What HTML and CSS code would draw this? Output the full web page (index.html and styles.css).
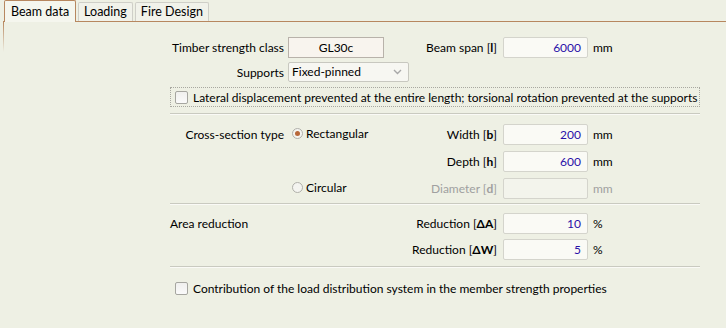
FILE: index.html
```html
<!DOCTYPE html>
<html>
<head>
<meta charset="utf-8">
<link rel="stylesheet" href="styles.css">
</head>
<body>
<div class="tabs">
  <div class="tab active">Beam data</div>
  <div class="tab">Loading</div>
  <div class="tab">Fire Design</div>
</div>
<div class="panel">
  <div class="form">
    <div class="grid top">
      <div class="lbl">Timber strength class</div>
      <div class="cell"><div class="field class-field">GL30c</div></div>
      <div class="lbl r2">Beam span [<b>l</b>]</div>
      <div class="cell"><div class="field num">6000</div></div>
      <div class="unit">mm</div>

      <div class="lbl">Supports</div>
      <div class="cell"><div class="select"><span>Fixed-pinned</span><svg class="chev" width="9" height="6" viewBox="0 0 9 6"><path d="M1 1 L4.5 4.5 L8 1" fill="none" stroke="#a8a8a8" stroke-width="1.4"/></svg></div></div>
    </div>

    <div class="dotted">
      <span class="check"></span>
      <span>Lateral displacement prevented at the entire length; torsional rotation prevented at the supports</span>
    </div>

    <div class="sep"></div>

    <div class="grid cross">
      <div class="lbl">Cross-section type</div>
      <div class="cell radio-cell"><span class="radio on"></span><span>Rectangular</span></div>
      <div class="lbl r2">Width [<b>b</b>]</div>
      <div class="cell"><div class="field num">200</div></div>
      <div class="unit">mm</div>

      <div class="lbl"></div>
      <div class="cell"></div>
      <div class="lbl r2">Depth [<b>h</b>]</div>
      <div class="cell"><div class="field num">600</div></div>
      <div class="unit">mm</div>

      <div class="lbl"></div>
      <div class="cell radio-cell"><span class="radio"></span><span>Circular</span></div>
      <div class="lbl r2 dis">Diameter [<b>d</b>]</div>
      <div class="cell"><div class="field num disabled"></div></div>
      <div class="unit dis">mm</div>
    </div>

    <div class="sep"></div>

    <div class="grid area">
      <div class="lbl left">Area reduction</div>
      <div class="cell"></div>
      <div class="lbl r2">Reduction [<b>ΔA</b>]</div>
      <div class="cell"><div class="field num">10</div></div>
      <div class="unit">%</div>

      <div class="lbl"></div>
      <div class="cell"></div>
      <div class="lbl r2">Reduction [<b>ΔW</b>]</div>
      <div class="cell"><div class="field num">5</div></div>
      <div class="unit">%</div>
    </div>

    <div class="sep"></div>

    <div class="checkrow">
      <span class="check"></span>
      <span>Contribution of the load distribution system in the member strength properties</span>
    </div>
  </div>
</div>
</body>
</html>
```

FILE: styles.css
```css
html, body {
  margin: 0;
  padding: 0;
}
body {
  background: #eef0e4;
  font-family: "Lato", "Noto Sans", sans-serif;
  font-size: 12px;
  color: #000;
  width: 726px;
  height: 328px;
  overflow: hidden;
}
.tabs {
  display: flex;
  align-items: flex-end;
  padding: 3px 0 0 4px;
  height: 21px;
  box-sizing: border-box;
  gap: 2px;
}
.tab {
  height: 19px;
  box-sizing: border-box;
  border: 1px solid #cfcfc8;
  border-bottom: none;
  border-radius: 2px 2px 0 0;
  background: #f1f2ea;
  padding: 0 5px;
  line-height: 18px;
  font-size: 12.5px;
}
.tab.active {
  height: 22px;
  margin-bottom: -1px;
  border: 1px solid #b7875f;
  border-bottom: none;
  background: #f5f6ee;
  line-height: 21px;
  position: relative;
  z-index: 1;
  padding: 0 6px;
}
.panel {
  margin-left: 3px;
  border-top: 1px solid #b7875f;
  height: 310px;
  background: linear-gradient(to bottom, #b7875f, #eef0e4 30px) no-repeat left top / 1px 100%;
}
.form {
  margin-left: 167px;
  width: 530px;
  padding-top: 13px;
}
.grid {
  display: grid;
  grid-template-columns: 118px 120px 95px 85px auto;
  align-items: center;
}
.top {
  grid-auto-rows: 25px;
}
.lbl {
  text-align: right;
  padding-right: 4px;
  white-space: nowrap;
}
.lbl.r2 {
  padding-right: 6px;
}
.lbl.left {
  text-align: left;
}
.lbl b {
  font-weight: 700;
}
.dis {
  color: #a0a0a0;
}
.unit {
  padding-left: 5px;
}
.field {
  height: 21px;
  box-sizing: border-box;
  border: 1px solid #d4d4cc;
  border-radius: 2px;
  background: #fafaf5;
  line-height: 19px;
  padding: 0 6px;
}
.class-field {
  width: 96px;
  text-align: center;
  border-color: #b8b2aa;
  border-radius: 0;
  background: #f8f4ee;
}
.num {
  text-align: right;
  color: #2a10a8;
}
.num.disabled {
  background: #f3f4ec;
}
.select {
  height: 20px;
  width: 121px;
  box-sizing: border-box;
  border: 1px solid #c8c8c0;
  border-radius: 2px;
  background: #f7f7f2;
  display: flex;
  align-items: center;
  justify-content: space-between;
  padding: 0 6px 0 3px;
  margin-top: -2px;
}
.dotted {
  margin-top: 2px;
  height: 20px;
  box-sizing: border-box;
  border: 1px dotted #a8a8a0;
  display: flex;
  align-items: center;
  gap: 5px;
  padding-left: 4px;
}
.check {
  display: inline-block;
  width: 13px;
  height: 13px;
  box-sizing: border-box;
  border: 1px solid #a6a6a0;
  border-radius: 2px;
  background: linear-gradient(#f0f0ee, #fafafa);
}
.sep {
  height: 1px;
  background: #c9cac0;
  border-bottom: 1px solid #fafaf6;
}
.dotted + .sep {
  margin-top: 6px;
}
.cross {
  grid-auto-rows: 27px;
  padding: 6px 0 1px;
}
.radio-cell {
  display: flex;
  align-items: center;
  gap: 3px;
  padding-left: 4px;
  align-self: start;
  padding-top: 5px;
}
.radio {
  display: inline-block;
  width: 11px;
  height: 11px;
  box-sizing: border-box;
  border: 1px solid #b0b0aa;
  border-radius: 50%;
  background: #f4f4f0;
  position: relative;
}
.radio.on::after {
  content: "";
  position: absolute;
  left: 2px;
  top: 2px;
  width: 5px;
  height: 5px;
  border-radius: 50%;
  background: #b8683a;
}
.area {
  grid-auto-rows: 26px;
  padding: 5px 0 4px;
}
.checkrow {
  display: flex;
  align-items: center;
  gap: 5px;
  padding: 13px 0 0 5px;
}
```
